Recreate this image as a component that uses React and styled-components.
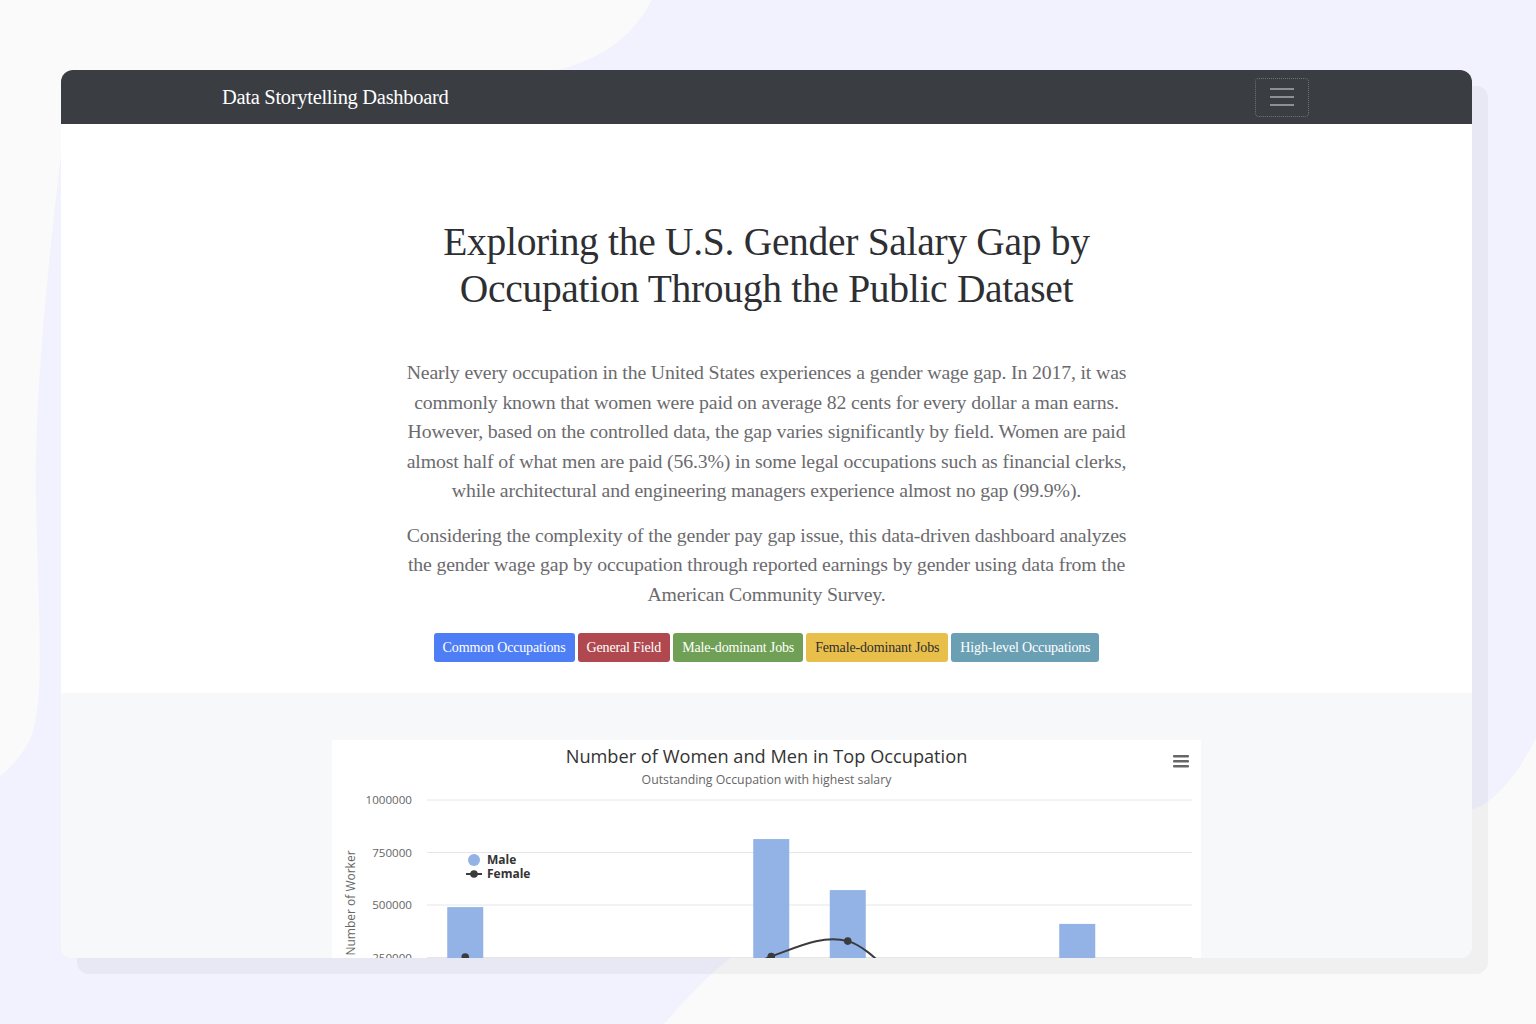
import React from "react";
import styled, { createGlobalStyle } from "styled-components";

const GlobalStyle = createGlobalStyle`
  html, body {
    margin: 0;
    padding: 0;
    background: #f2f2fe;
  }
  body {
    font-family: "Liberation Serif", "DejaVu Serif", serif;
    overflow: hidden;
  }
`;

const Page = styled.div`
  position: relative;
  width: 1536px;
  height: 1024px;
  overflow: hidden;
`;

const Backdrop = styled.svg`
  position: absolute;
  inset: 0;
`;

const Stage = styled.div`
  position: relative;
  padding: 70px 0 0 61px;
`;

const Window = styled.div`
  width: 1411px;
  height: 888px;
  border-radius: 12px;
  overflow: hidden;
  background: #fff;
  box-shadow: 16px 16px 0 0 rgba(20, 20, 40, 0.045);
  display: flex;
  flex-direction: column;
`;

const NavBar = styled.nav`
  flex: 0 0 54px;
  background: #3a3d42;
  display: flex;
  align-items: center;
  justify-content: space-between;
  padding: 0 163px 0 161px;
`;

const Brand = styled.span`
  color: #fff;
  font-size: 20.5px;
  letter-spacing: -0.3px;
`;

const Toggler = styled.button`
  width: 54px;
  height: 39px;
  background: transparent;
  border: 1px dotted rgba(255, 255, 255, 0.28);
  border-radius: 4px;
  display: flex;
  flex-direction: column;
  align-items: center;
  justify-content: center;
  gap: 6px;
  padding: 0;
`;

const TogglerLine = styled.span`
  width: 24px;
  height: 2px;
  background: #8e9093;
`;

const Hero = styled.section`
  flex: 0 0 569px;
  display: flex;
  flex-direction: column;
  align-items: center;
  padding-top: 95px;
  box-sizing: border-box;
`;

const Title = styled.h1`
  margin: 0;
  font-weight: 400;
  font-size: 39.5px;
  line-height: 47px;
  color: #2d2f33;
  text-align: center;
  letter-spacing: -0.3px;
`;

const Lead = styled.p`
  margin: ${(p) => (p.$first ? "45px" : "15px")} 0 0;
  font-size: 19.8px;
  line-height: 29.5px;
  color: #6b6b6e;
  text-align: center;
  letter-spacing: -0.15px;
`;

const ButtonRow = styled.div`
  display: flex;
  gap: 3px;
  margin-top: 24px;
`;

const Pill = styled.button`
  height: 29px;
  padding: 0 9px;
  border: none;
  border-radius: 3px;
  background: ${(p) => p.$bg};
  color: ${(p) => p.$fg || "#fff"};
  font-family: "Liberation Serif", "DejaVu Serif", serif;
  font-size: 14px;
  letter-spacing: -0.15px;
`;

const ChartSection = styled.section`
  flex: 1;
  background: #f7f8fa;
  display: flex;
  justify-content: center;
  padding-top: 47px;
`;

const ChartCard = styled.div`
  width: 869px;
  height: 420px;
  background: #fff;
`;

const buttons = [
  { label: "Common Occupations", bg: "#4e7ef6" },
  { label: "General Field", bg: "#b0494f" },
  { label: "Male-dominant Jobs", bg: "#70a055" },
  { label: "Female-dominant Jobs", bg: "#e9bf4c", fg: "#2f2f2f" },
  { label: "High-level Occupations", bg: "#6b9fb4" },
];

// chart geometry (card coordinates)
const plotLeft = 95;
const plotRight = 860;
const zeroY = 270;
const scale = 210 / 1000000;
const catW = (plotRight - plotLeft) / 10;
const male = [490000, 150000, 120000, 90000, 814000, 571000, 130000, 80000, 410000, 110000];
const female = [252000, 80000, 60000, 70000, 255000, 328000, 60000, 40000, 190000, 70000];

const cx = (i) => plotLeft + catW / 2 + catW * i;
const vy = (v) => zeroY - v * scale;

function splinePath(values) {
  const pts = values.map((v, i) => [cx(i), vy(v)]);
  let d = `M${pts[0][0]},${pts[0][1]}`;
  for (let i = 0; i < pts.length - 1; i++) {
    const p0 = pts[i - 1] || pts[i];
    const p1 = pts[i];
    const p2 = pts[i + 1];
    const p3 = pts[i + 2] || p2;
    const c1 = [p1[0] + (p2[0] - p0[0]) / 6, p1[1] + (p2[1] - p0[1]) / 6];
    const c2 = [p2[0] - (p3[0] - p1[0]) / 6, p2[1] - (p3[1] - p1[1]) / 6];
    d += ` C${c1[0]},${c1[1]} ${c2[0]},${c2[1]} ${p2[0]},${p2[1]}`;
  }
  return d;
}

function OccupationChart() {
  const ticks = [1000000, 750000, 500000, 250000];
  return (
    <svg width="869" height="420" fontFamily="'Open Sans', 'DejaVu Sans', sans-serif">
      <text x="434.5" y="23" textAnchor="middle" fontSize="18.2" fill="#333">
        Number of Women and Men in Top Occupation
      </text>
      <text x="434.5" y="44" textAnchor="middle" fontSize="12.3" fill="#666">
        Outstanding Occupation with highest salary
      </text>
      <g fill="#666">
        <rect x="841" y="15" width="16" height="2.6" rx="1" />
        <rect x="841" y="20" width="16" height="2.6" rx="1" />
        <rect x="841" y="25" width="16" height="2.6" rx="1" />
      </g>
      <line x1={plotLeft} x2={plotRight} y1={zeroY} y2={zeroY} stroke="#e6e6e6" />
      {ticks.map((t) => (
        <g key={t}>
          <line x1={plotLeft} x2={plotRight} y1={vy(t)} y2={vy(t)} stroke="#e6e6e6" />
          <text x="80" y={vy(t) + 4} textAnchor="end" fontSize="11.6" fill="#666">
            {t}
          </text>
        </g>
      ))}
      <text
        x="0"
        y="0"
        transform="translate(23,163) rotate(-90)"
        textAnchor="middle"
        fontSize="12"
        fill="#666"
      >
        Number of Worker
      </text>
      {male.map((v, i) => (
        <rect key={i} x={cx(i) - 18} y={vy(v)} width="36" height={v * scale} fill="#93b2e6" />
      ))}
      <path d={splinePath(female)} fill="none" stroke="#3b3b3e" strokeWidth="2" />
      {female.map((v, i) => (
        <circle key={i} cx={cx(i)} cy={vy(v)} r="3.8" fill="#3b3b3e" />
      ))}
      <circle cx="142" cy="120" r="6" fill="#93b2e6" />
      <text x="155" y="124" fontSize="12" fontWeight="700" fill="#333">
        Male
      </text>
      <line x1="134" x2="150" y1="134" y2="134" stroke="#3b3b3e" strokeWidth="2" />
      <circle cx="142" cy="134" r="3.8" fill="#3b3b3e" />
      <text x="155" y="138" fontSize="12" fontWeight="700" fill="#333">
        Female
      </text>
    </svg>
  );
}

export default function App() {
  return (
    <Page>
      <GlobalStyle />
      <Backdrop width="1536" height="1024" viewBox="0 0 1536 1024">
        <path
          d="M0,0 L652,0 C630,40 600,62 540,74 L300,120 L64,130 C48,260 34,400 36,500 C38,620 46,700 30,740 C20,758 10,768 0,776 Z"
          fill="#fafafa"
        />
        <path
          d="M1536,738 C1520,770 1505,790 1482,806 L1200,900 L760,936 C715,966 690,995 664,1024 L1536,1024 Z"
          fill="#fafafa"
        />
      </Backdrop>
      <Stage>
        <Window>
          <NavBar>
            <Brand>Data Storytelling Dashboard</Brand>
            <Toggler aria-label="menu">
              <TogglerLine />
              <TogglerLine />
              <TogglerLine />
            </Toggler>
          </NavBar>
          <Hero>
            <Title>
              Exploring the U.S. Gender Salary Gap by
              <br />
              Occupation Through the Public Dataset
            </Title>
            <Lead $first>
              Nearly every occupation in the United States experiences a gender wage gap. In 2017, it was
              <br />
              commonly known that women were paid on average 82 cents for every dollar a man earns.
              <br />
              However, based on the controlled data, the gap varies significantly by field. Women are paid
              <br />
              almost half of what men are paid (56.3%) in some legal occupations such as financial clerks,
              <br />
              while architectural and engineering managers experience almost no gap (99.9%).
            </Lead>
            <Lead>
              Considering the complexity of the gender pay gap issue, this data-driven dashboard analyzes
              <br />
              the gender wage gap by occupation through reported earnings by gender using data from the
              <br />
              American Community Survey.
            </Lead>
            <ButtonRow>
              {buttons.map((b) => (
                <Pill key={b.label} $bg={b.bg} $fg={b.fg}>
                  {b.label}
                </Pill>
              ))}
            </ButtonRow>
          </Hero>
          <ChartSection>
            <ChartCard>
              <OccupationChart />
            </ChartCard>
          </ChartSection>
        </Window>
      </Stage>
    </Page>
  );
}
